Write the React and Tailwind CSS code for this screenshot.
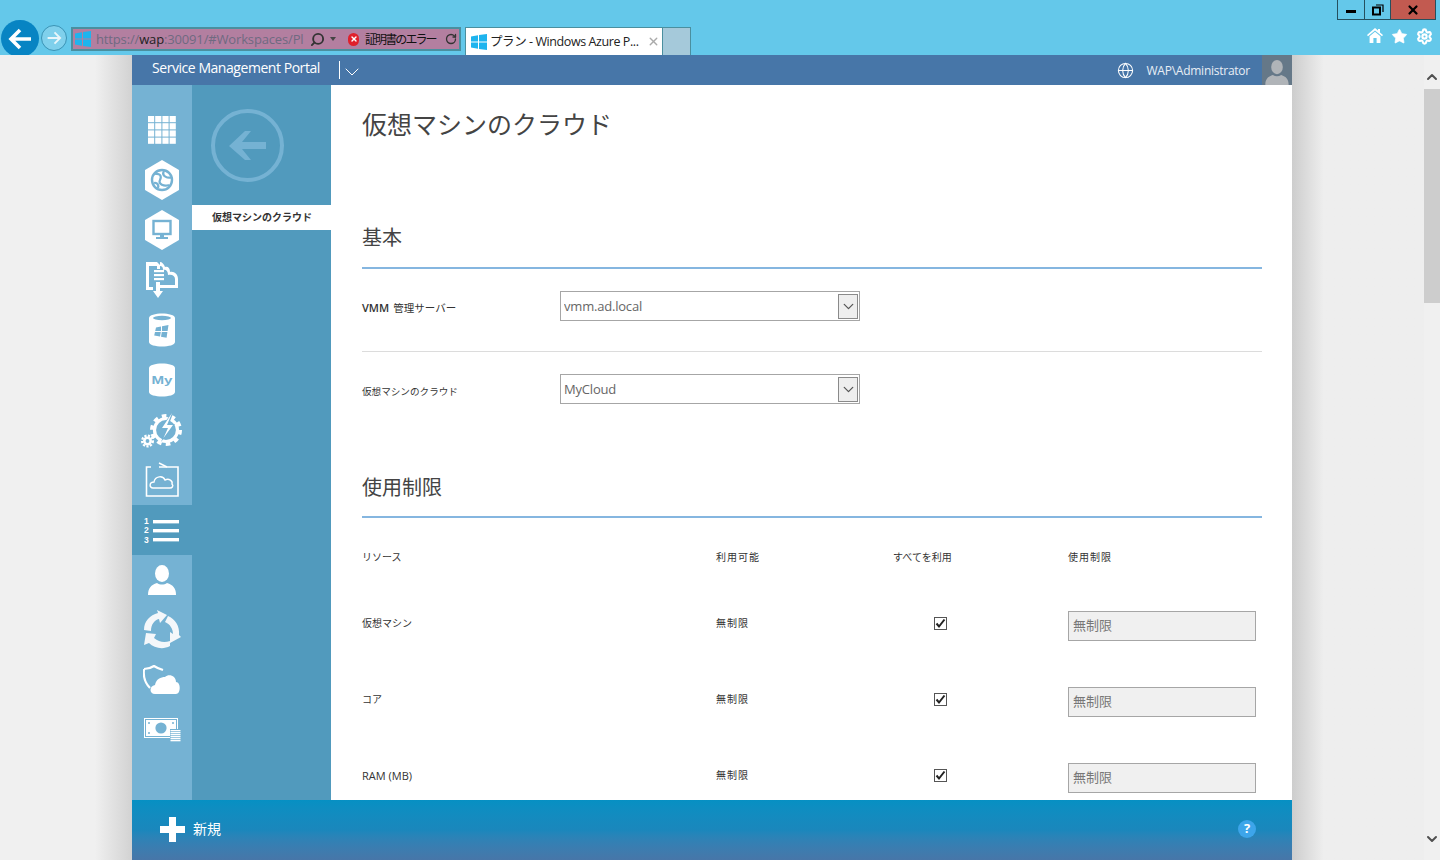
import React from 'react';
import { Star, Settings, Search, RotateCw, Globe, ChevronDown, ChevronUp, X } from 'lucide-react';

const NAV_BG = '#75b2d3';

const WinLogo = ({ size = 16 }) => (
    <svg width={size} height={size} viewBox="0 0 16 16" className="shrink-0">
        <path d="M0 2.4 L7 1.3 V7.5 H0 Z M8 1.1 L16 0 V7.5 H8 Z M0 8.5 H7 V14.7 L0 13.6 Z M8 8.5 H16 V16 L8 14.9 Z" fill="#1eb4ee" />
    </svg>
);

const GridIcon = () => (
    <svg width="28" height="28" viewBox="0 0 28 28" fill="#fff">
        {[0, 7.2, 14.4, 21.6].map((y) =>
            [0, 7.2, 14.4, 21.6].map((x) => <rect key={`${x}-${y}`} x={x} y={y} width="6.2" height="6.2" />)
        )}
    </svg>
);

const HexIcon = ({ children }) => (
    <svg width="36" height="40" viewBox="0 0 36 40">
        <polygon points="18,0 35,10 35,30 18,40 1,30 1,10" fill="#fff" />
        {children}
    </svg>
);

const WebIcon = () => (
    <HexIcon>
        <circle cx="18" cy="20" r="10" fill="none" stroke={NAV_BG} strokeWidth="2.4" />
        <path d="M11 14 C16 13 18 16 16 20 C14 24 20 27 25 25 M20 11 C17 16 24 19 28 17 M10 23 C13 22 15 25 14 28" fill="none" stroke={NAV_BG} strokeWidth="2.2" />
    </HexIcon>
);

const VmIcon = () => (
    <HexIcon>
        <rect x="9.5" y="11" width="17" height="13" fill="none" stroke={NAV_BG} strokeWidth="2.4" />
        <path d="M16 24 V27 H12 V29 H24 V27 H20 V24 Z" fill={NAV_BG} />
    </HexIcon>
);

const ServiceBusIcon = () => (
    <svg width="34" height="38" viewBox="0 0 34 38" fill="#fff">
        <path d="M1 1 H12 L15 4 V8 H12 V5 H4 V26 H8 V29 H1 Z" />
        <path d="M15 1 C17 1 19 3 20 6 C23 5 25 7 25 11 C29 10 33 13 33 18 V27 H15 V24 H30 V18 C30 15 27 13 23 14 C23 10 21 8 18 9 C18 6 17 5 15 5 Z" />
        <rect x="9" y="9" width="10" height="2.2" />
        <rect x="9" y="13" width="10" height="2.2" />
        <rect x="9" y="17" width="10" height="2.2" />
        <path d="M11 21 H15 V30 H18 L13 37 L8 30 H11 Z" />
    </svg>
);

const DbIcon = ({ children }) => (
    <svg width="26" height="34" viewBox="0 0 26 34">
        <path d="M0 5 C0 -1 26 -1 26 5 V29 C26 35 0 35 0 29 Z" fill="#fff" />
        {children}
    </svg>
);

const SqlIcon = () => (
    <DbIcon>
        <ellipse cx="13" cy="5" rx="9" ry="2.2" fill={NAV_BG} />
        <path d="M7 14.5 L12 13.5 V18 H6.2 Z M13 13.3 L19.5 12 L18.6 18 H13 Z M6 19 H11.8 L11 23.5 L5.2 22.5 Z M12.8 19 H18.4 L17.6 24.8 L12 23.7 Z" fill={NAV_BG} />
    </DbIcon>
);

const MySqlIcon = () => (
    <DbIcon>
        <text x="2.5" y="21" fontSize="11.5" fontWeight="700" textLength="21" lengthAdjust="spacingAndGlyphs" fontFamily="'Liberation Sans', sans-serif" fill={NAV_BG}>My</text>
    </DbIcon>
);

const AutomationIcon = () => (
    <svg width="42" height="36" viewBox="0 0 42 36" fill="none">
        <circle cx="25" cy="18" r="11.5" stroke="#fff" strokeWidth="3.2" />
        <circle cx="25" cy="18" r="14.2" stroke="#fff" strokeWidth="3.6" strokeDasharray="4.6 4.3" />
        <path d="M32 -1 L19 17 H25 L20 30 L34 12 H28 L33 -1 Z" fill={NAV_BG} />
        <path d="M31 1 L21 16 H27 L22.5 26 L32 13 H26 Z" fill="#fff" />
        <circle cx="6.5" cy="29" r="3.2" stroke="#fff" strokeWidth="2.6" />
        <circle cx="6.5" cy="29" r="5.4" stroke="#fff" strokeWidth="2.2" strokeDasharray="2.2 1.4" />
    </svg>
);

const CloudBoxIcon = () => (
    <svg width="34" height="36" viewBox="0 0 34 36" fill="none" stroke="#fff">
        <path d="M14 5 H33 V34 H1.5 V5 H6" strokeWidth="1.6" />
        <path d="M14 1 L22 5" strokeWidth="1.4" />
        <path d="M8 26 C4 26 4 20 9 20 C10 14 18 13 20 18 C24 16 28 19 27 22 C29 24 27 26 25 26 Z" strokeWidth="1.4" />
    </svg>
);

const PlansIcon = () => (
    <svg width="36" height="26" viewBox="0 0 36 26" fill="#fff">
        <rect x="9" y="3" width="26" height="3.4" />
        <rect x="9" y="12" width="26" height="3.4" />
        <rect x="9" y="21" width="26" height="3.4" />
        <text x="0" y="7" fontSize="8.5" fontWeight="700" fontFamily="'Liberation Sans', sans-serif">1</text>
        <text x="0" y="16" fontSize="8.5" fontWeight="700" fontFamily="'Liberation Sans', sans-serif">2</text>
        <text x="0" y="25.5" fontSize="8.5" fontWeight="700" fontFamily="'Liberation Sans', sans-serif">3</text>
    </svg>
);

const UserIcon = ({ fill = '#fff', w = 28, h = 30 }) => (
    <svg width={w} height={h} viewBox="0 0 28 30" fill={fill}>
        <ellipse cx="14" cy="8.5" rx="7" ry="8.5" />
        <path d="M0 30 C0 23 3 20 9 18 C12 20 16 20 19 18 C25 20 28 23 28 30 Z" />
    </svg>
);

const RecycleIcon = () => (
    <svg width="38" height="40" viewBox="0 0 38 40" fill="#f4f7fa">
        <path d="M1 20 C1 11 7 5 15 3 L14 0 L24 5 L17 13 L16 9 C11 10 8 15 8 21 Z" />
        <path d="M25 6 C32 9 37 16 36 25 L38 27 L27 33 L27 22 L30 24 C30 19 27 14 22 12 Z" />
        <path d="M3 23 L13 24 L11 28 C16 32 21 33 27 31 L27 36 C20 40 11 38 6 33 L1 35 Z" />
    </svg>
);

const ShieldCloudIcon = () => (
    <svg width="38" height="30" viewBox="0 0 38 30">
        <path d="M1 4 C5 4 8 3 11 1 C14 3 17 4 20 5 M1 4 C0 12 2 18 7 23" fill="none" stroke="#fff" strokeWidth="2.2" />
        <path d="M12 29 C6 29 6 21 12 20 C13 14 18 12 22 12 C26 8 33 11 33 17 C38 17 38 29 33 29 Z" fill="#fff" />
    </svg>
);

const MoneyIcon = () => (
    <svg width="37" height="24" viewBox="0 0 37 24">
        <rect x="0.5" y="0.5" width="33" height="19" fill="none" stroke="#fff" />
        <rect x="2" y="2" width="30" height="16" fill="#fff" />
        <circle cx="17" cy="10" r="5.6" fill={NAV_BG} />
        <circle cx="5" cy="5" r="1" fill={NAV_BG} />
        <circle cx="29" cy="5" r="1" fill={NAV_BG} />
        <circle cx="5" cy="15" r="1" fill={NAV_BG} />
        <circle cx="29" cy="15" r="1" fill={NAV_BG} />
        <rect x="26" y="11" width="11" height="12.5" fill={NAV_BG} />
        {[12, 14, 16, 18, 20, 22].map((y) => (
            <rect key={y} x="26.5" y={y} width="10" height="1.3" fill="#fff" />
        ))}
    </svg>
);

const HomeIcon = () => (
    <svg width="16" height="15" viewBox="0 0 16 15" fill="#fff">
        <path d="M8 0 L11 2.6 V1 H13 V4.4 L16 7 L15 8.2 L8 2.4 L1 8.2 L0 7 Z" />
        <path d="M2.6 8.2 L8 3.8 L13.4 8.2 V15 H9.6 V10 H6.4 V15 H2.6 Z" />
    </svg>
);

const navItems = [
    { id: 'all', icon: <GridIcon /> },
    { id: 'web', icon: <WebIcon /> },
    { id: 'vm', icon: <VmIcon /> },
    { id: 'bus', icon: <ServiceBusIcon /> },
    { id: 'sql', icon: <SqlIcon /> },
    { id: 'mysql', icon: <MySqlIcon /> },
    { id: 'auto', icon: <AutomationIcon /> },
    { id: 'cloud', icon: <CloudBoxIcon /> },
    { id: 'plans', icon: <PlansIcon />, active: true },
    { id: 'users', icon: <UserIcon /> },
    { id: 'recycle', icon: <RecycleIcon /> },
    { id: 'shield', icon: <ShieldCloudIcon /> },
    { id: 'money', icon: <MoneyIcon /> },
];

const limits = [
    { name: '仮想マシン' },
    { name: 'コア' },
    { name: 'RAM (MB)', latin: true },
];

const FONT = "font-['Open_Sans','Noto_Sans_CJK_JP',sans-serif]";

const SectionTitle = ({ children, className }) => (
    <h2 className={`h-[47px] border-b-2 border-[#85b6e0] text-[20px] leading-[30px] text-[#444] ${className}`}>{children}</h2>
);

const SelectRow = ({ label, value, className }) => (
    <div className={`flex h-[30px] items-center ${className}`}>
        <label className="w-[198px] text-[#333]">{label}</label>
        <div className="relative w-[300px]">
            <select defaultValue={value} className="block h-[30px] w-full appearance-none border border-[#a6a6a6] bg-white pl-[3px] pt-[2px] text-[13px] tracking-[-0.2px] text-[#666]">
                <option>{value}</option>
            </select>
            <span className="pointer-events-none absolute right-[2px] top-[3px] flex h-[25px] w-[20px] items-center justify-center border border-[#8a8a8a] bg-[#eeeeee]">
                <ChevronDown size={17} strokeWidth={1.8} color="#555" />
            </span>
        </div>
    </div>
);

const App = () => {
    return (
        <div className={`flex h-[860px] w-[1440px] flex-col overflow-hidden bg-[#f0f0f0] ${FONT}`}>
            {/* IE chrome */}
            <div className="h-[55px] shrink-0 bg-[#64c8ea]">
                <div className="flex h-[20px] justify-end pr-[4px]">
                    <div className="flex h-[20px] border border-t-0 border-[#25505f] text-black">
                        <span className="flex w-[27px] items-center justify-center border-r border-[#25505f]">
                            <span className="mt-[3px] h-[3px] w-[10px] bg-black" />
                        </span>
                        <span className="flex w-[26px] items-center justify-center border-r border-[#25505f]">
                            <svg width="12" height="12" viewBox="0 0 12 12" fill="none" stroke="#000">
                                <rect x="1" y="3.5" width="7" height="7" strokeWidth="2" />
                                <path d="M4 1 H11 V8" strokeWidth="1.2" />
                            </svg>
                        </span>
                        <span className="flex w-[44px] items-center justify-center bg-[#c25a50]">
                            <X size={14} strokeWidth={3.8} color="#000" />
                        </span>
                    </div>
                </div>
                <div className="flex h-[35px] items-start">
                    <div className="ml-[1px] flex h-[37px] w-[38px] shrink-0 items-center justify-center rounded-full bg-[#0784c3]">
                        <svg width="24" height="22" viewBox="0 0 24 22" fill="none" stroke="#fff" strokeWidth="3.6">
                            <path d="M23 11 H3 M12 2 L3 11 L12 20" />
                        </svg>
                    </div>
                    <div className="ml-[2px] mt-[5px] flex h-[26px] w-[26px] shrink-0 items-center justify-center rounded-full border border-[#3a93b5] bg-[#7fd0ec]">
                        <svg width="15" height="14" viewBox="0 0 24 22" fill="none" stroke="#e8f6fb" strokeWidth="3">
                            <path d="M1 11 H21 M12 2 L21 11 L12 20" />
                        </svg>
                    </div>
                    <div className="ml-[4px] mt-[7px] flex h-[24px] w-[390px] shrink-0 items-center border-2 border-[#4a8f9f] bg-[#b37fa0] pl-[2px]">
                        <WinLogo />
                        <span className="ml-[5px] mt-[1px] w-[209px] overflow-hidden whitespace-nowrap text-[13px] tracking-[-0.15px] text-[#6f6a80]">
                            https://<span className="text-[#222]">wap</span>:30091/#Workspaces/Pl
                        </span>
                        <Search size={15} strokeWidth={3} color="#333" className="ml-[5px] shrink-0 -scale-x-100" />
                        <span className="ml-[5px] h-0 w-0 shrink-0 border-x-[3px] border-t-[4px] border-x-transparent border-t-[#444]" />
                        <span className="ml-[12px] flex h-[13px] w-[11px] shrink-0 items-center justify-center rounded-full bg-[#e0202c]">
                            <X size={8} strokeWidth={4} color="#fff" />
                        </span>
                        <span className="ml-[6px] mt-[1px] w-[74px] whitespace-nowrap text-[12px] tracking-[-1.9px] text-[#111]">証明書のエラー</span>
                        <RotateCw size={12} strokeWidth={2.6} color="#333" className="ml-[6px] shrink-0" />
                    </div>
                    <div className="ml-[4px] mt-[7px] flex h-[28px] w-[198px] shrink-0 items-center border border-b-0 border-[#4a8f9f] bg-white pl-[5px]">
                        <WinLogo />
                        <span className="ml-[3px] mt-[1px] w-[150px] overflow-hidden whitespace-nowrap text-[12.5px] tracking-[-0.42px] text-[#222]">プラン - Windows Azure P...</span>
                        <X size={13} strokeWidth={2.5} color="#aaa" className="ml-[7px] shrink-0" />
                    </div>
                    <div className="mt-[7px] h-[28px] w-[28px] shrink-0 border border-b-0 border-l-0 border-[#4a8f9f] bg-[#a5c9da]" />
                    <div className="flex flex-1 justify-end gap-[8px] pr-[7px] pt-[8px]">
                        <HomeIcon />
                        <Star size={17} fill="#fff" strokeWidth={1} color="#fff" />
                        <Settings size={17} strokeWidth={3} color="#fff" />
                    </div>
                </div>
            </div>

            <div className="flex min-h-0 flex-1">
                <div className="w-[132px] shrink-0 bg-gradient-to-r from-[#f0f0f0] from-[72%] to-[#d2d2d2]" />

                {/* portal */}
                <div className="flex w-[1160px] shrink-0 flex-col">
                    <header className="flex h-[30px] shrink-0 items-center bg-[#4776a8] text-white">
                        <span className="mb-[5px] ml-[20px] w-[187px] whitespace-nowrap text-[14px] tracking-[-0.45px]">Service Management Portal</span>
                        <span className="mb-[1px] h-[18px] w-px bg-white" />
                        <ChevronDown size={24} strokeWidth={1} className="mt-[4px]" />
                        <Globe size={17} strokeWidth={1.5} className="ml-auto" />
                        <span className="ml-[13px] mt-[2px] text-[12px] tracking-[-0.25px] text-[#e8eef5]">WAP\Administrator</span>
                        <span className="ml-[12px] flex h-[30px] w-[30px] items-end justify-center overflow-hidden bg-[#657888]">
                            <UserIcon fill="#b0b4b8" w={24} h={25} />
                        </span>
                    </header>

                    <div className="flex min-h-0 flex-1">
                        <nav className="w-[60px] shrink-0 bg-[#75b2d3] pt-[20px]">
                            {navItems.map((item) => (
                                <div key={item.id} className={`flex h-[50px] items-center justify-center ${item.active ? 'bg-[#519abd]' : ''}`}>
                                    {item.icon}
                                </div>
                            ))}
                        </nav>

                        <aside className="w-[139px] shrink-0 bg-[#519abd]">
                            <div className="ml-[19px] mt-[24px] flex h-[73px] w-[73px] items-center justify-center rounded-full border-[4px] border-[#75b2d3]">
                                <svg width="40" height="30" viewBox="0 0 40 30" fill="#75b2d3">
                                    <path d="M17 0 H23 L14 11 H38 V18 H14 L23 29 H17 L1 15 Z" />
                                </svg>
                            </div>
                            <div className="mt-[23px] flex h-[25px] items-center bg-white pl-[20px] text-[10px] font-bold text-[#333]">
                                仮想マシンのクラウド
                            </div>
                        </aside>

                        <main className="min-w-0 flex-1 overflow-hidden bg-white pl-[31px] pr-[30px]">
                            <h1 className="mt-[22px] h-[34px] text-[25px] leading-[34px] text-[#444]">仮想マシンのクラウド</h1>

                            <SectionTitle className="mt-[81px] pt-[1px]">基本</SectionTitle>
                            <SelectRow
                                className="mt-[22px]"
                                label={<><span className="text-[11px] font-semibold">VMM</span> <span className="text-[10.5px]">管理サーバー</span></>}
                                value="vmm.ad.local"
                            />
                            <div className="mt-[30px] h-px bg-[#dcdcdc]" />
                            <SelectRow className="mt-[22px]" label={<span className="text-[9.6px]">仮想マシンのクラウド</span>} value="MyCloud" />

                            <SectionTitle className="mt-[67px] pt-[2px]">使用制限</SectionTitle>

                            <div className="mt-[31px] grid grid-cols-[354px_177px_175px_1fr] text-[10px] text-[#333]">
                                <span className="h-[16px] leading-[16px]">リソース</span>
                                <span className="h-[16px] leading-[16px] tracking-[1px]">利用可能</span>
                                <span className="h-[16px] leading-[16px]">すべてを利用</span>
                                <span className="h-[16px] leading-[16px] tracking-[1px]">使用制限</span>
                            </div>

                            <div className="mt-[46px] flex flex-col gap-[46px]">
                                {limits.map((row) => (
                                    <div key={row.name} className="grid h-[30px] grid-cols-[354px_177px_175px_1fr] text-[10px] text-[#333]">
                                        <span className={`leading-[24px] ${row.latin ? 'pt-[1px] text-[11px] font-medium' : ''}`}>{row.name}</span>
                                        <span className="leading-[24px] tracking-[1px]">無制限</span>
                                        <span className="pl-[41px] pt-[6px]">
                                            <span className="flex h-[13px] w-[13px] items-center justify-center border border-[#555] bg-white">
                                                <svg width="11" height="11" viewBox="0 0 11 11" fill="none" stroke="#222" strokeWidth="2">
                                                    <path d="M1.5 5.5 L4 8.5 L9.5 1.5" />
                                                </svg>
                                            </span>
                                        </span>
                                        <input
                                            readOnly
                                            value="無制限"
                                            className="h-[30px] w-[188px] border border-[#a6a6a6] bg-[#f0f0f0] pb-[4px] pl-[4px] text-[13px] text-[#777]"
                                        />
                                    </div>
                                ))}
                            </div>
                        </main>
                    </div>

                    <footer className="flex h-[60px] shrink-0 items-center bg-gradient-to-b from-[#0690c3] via-[#1a87bc] via-50% to-[#4776a8] pb-[2px] pl-[28px] pr-[36px] text-white">
                        <svg width="25" height="25" viewBox="0 0 25 25" fill="#fff">
                            <path d="M9 0 H16 V9 H25 V16 H16 V25 H9 V16 H0 V9 H9 Z" />
                        </svg>
                        <span className="mb-[2px] ml-[8px] text-[14px]">新規</span>
                        <span className="ml-auto flex h-[18px] w-[18px] items-center justify-center rounded-full bg-[#3da5ea] text-[13px] font-bold">?</span>
                    </footer>
                </div>

                <div className="flex-1 bg-gradient-to-r from-[#cdcdcd] to-[#eeeeee] to-[24%]" />

                {/* scrollbar */}
                <div className="flex w-[16px] shrink-0 flex-col items-center bg-[#f0f0f0]">
                    <ChevronUp size={16} strokeWidth={3} color="#505050" className="mt-[14px]" />
                    <div className="mt-[4px] h-[214px] w-full bg-[#cdcdcd]" />
                    <ChevronDown size={16} strokeWidth={3} color="#505050" className="mt-auto mb-[13px]" />
                </div>
            </div>
        </div>
    );
};

export default App;
